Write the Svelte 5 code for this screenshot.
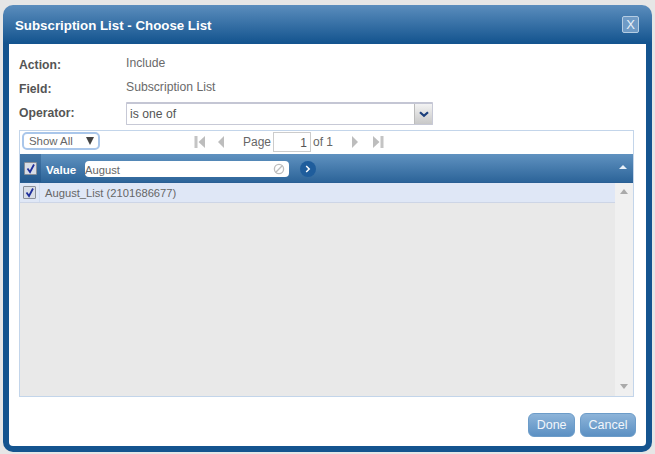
<script>
  let filter = $state('August');
</script>

<div class="page">
  <div class="dialog">
    <header class="title">
      <h1>Subscription List - Choose List</h1>
      <button class="close" aria-label="Close">X</button>
    </header>
    <div class="body">
      <div class="fields">
        <div class="lbl l1">Action:</div><div class="val v1">Include</div>
        <div class="lbl l2">Field:</div><div class="val v2">Subscription List</div>
        <div class="lbl l3">Operator:</div>
        <div class="select">
          <span class="seltext">is one of</span>
          <span class="selbtn">
            <svg width="10" height="7" viewBox="0 0 10 7"><path d="M1 1.2 L5 4.8 L9 1.2" fill="none" stroke="#1c3f7c" stroke-width="2.2"/></svg>
          </span>
        </div>
      </div>

      <div class="panel">
        <div class="toolbar">
          <div class="showall"><span>Show All</span><i class="tri"></i></div>
          <div class="pager">
            <svg class="first" width="12" height="14" viewBox="0 0 12 14"><rect x="0.5" y="1" width="3" height="12" fill="#c4c4c4"/><path d="M11 1 V13 L4.5 7 Z" fill="#bdbdbd"/></svg>
            <svg class="prev" width="8" height="14" viewBox="0 0 8 14"><path d="M7 1 V13 L1 7 Z" fill="#bdbdbd"/></svg>
            <span class="page-l">Page</span>
            <span class="pageinput">1</span>
            <span class="of">of 1</span>
            <svg class="next" width="8" height="14" viewBox="0 0 8 14"><path d="M1 1 V13 L7 7 Z" fill="#bdbdbd"/></svg>
            <svg class="last" width="12" height="14" viewBox="0 0 12 14"><path d="M1 1 V13 L7.5 7 Z" fill="#bdbdbd"/><rect x="8.5" y="1" width="3" height="12" fill="#c4c4c4"/></svg>
          </div>
        </div>
        <div class="thead">
          <div class="hcheck"><span class="check"><svg width="11" height="11" viewBox="0 0 11 11"><path d="M2.5 5.5 L5 9 L9 1.5" fill="none" stroke="#1f2f9c" stroke-width="1.8"/></svg></span></div>
          <span class="hvalue">Value</span>
          <div class="search">
            <input bind:value={filter} aria-label="Filter" />
            <svg width="12" height="12" viewBox="0 0 12 12"><circle cx="6" cy="6" r="4.6" fill="none" stroke="#bdbdbd" stroke-width="1.3"/><path d="M2.8 9.2 L9.2 2.8" stroke="#bdbdbd" stroke-width="1.3"/></svg>
          </div>
          <span class="go"><svg width="6" height="8" viewBox="0 0 6 8"><path d="M1.2 1 L4.2 4 L1.2 7" fill="none" stroke="#fff" stroke-width="1.5"/></svg></span>
          <i class="hsort"></i>
        </div>
        <div class="list">
          <div class="rows">
            <div class="row">
              <div class="rcheck"><span class="check"><svg width="11" height="11" viewBox="0 0 11 11"><path d="M2.5 5.5 L5 9 L9 1.5" fill="none" stroke="#1f2f9c" stroke-width="1.8"/></svg></span></div>
              <span class="rtext">August_List (2101686677)</span>
            </div>
          </div>
          <div class="scroll"><i class="up"></i><i class="down"></i></div>
        </div>
      </div>

      <div class="actions">
        <button class="btn">Done</button>
        <button class="btn">Cancel</button>
      </div>
    </div>
  </div>
</div>

<style>
  :global(body) { margin: 0; background: #e6e6e6; }
  .page {
    width: 655px; height: 454px; box-sizing: border-box; padding: 5px 3px 1px;
    font-family: "Liberation Sans", Arial, sans-serif; overflow: hidden;
  }
  .dialog {
    height: 447px; box-sizing: border-box; background: #14548f; border-radius: 10px;
    padding: 0 6px 6px; display: flex; flex-direction: column;
    background-image: linear-gradient(#5b8dbd 0, #14548f 38px, #14548f 100%);
  }
  .title { height: 39px; flex: none; display: flex; align-items: center; justify-content: space-between; padding: 0 7px 0 6px; box-sizing: border-box; }
  h1 { margin: 2px 0 0; font-size: 13.3px; font-weight: 700; color: #fff; }
  .close {
    width: 17px; height: 17px; padding: 0; box-sizing: border-box; border: 1px solid #b5cde3; border-radius: 2px;
    background: #6f9bc6; color: #e8f0f8; font: 13px "Liberation Sans", sans-serif; line-height: 14px;
  }
  .body { flex: 1; background: #fff; border-radius: 0 0 4px 4px; padding: 0 12px 0 10px; display: flex; flex-direction: column; min-height: 0; }
  .fields { display: grid; grid-template-columns: 107px 307px; grid-template-rows: 24px 24px 27px; height: 86px; padding-top: 9px; box-sizing: border-box; }
  .lbl { font-size: 12.2px; font-weight: 700; color: #555; padding-top: 5px; }
  .val { font-size: 12.2px; color: #6a6a6a; padding-top: 3px; }
  .select { height: 23px; width: 307px; box-sizing: border-box; border: 1px solid #c7c9d6; border-top: 2px solid #c4c6d4; display: flex; background: #fff; margin-top: 1px; border-radius: 1px; }
  .seltext { flex: 1; font-size: 12.2px; color: #555; padding: 3px 0 0 3px; }
  .selbtn { width: 17px; background: linear-gradient(#f3f3f3, #c8c8c8); border-left: 1px solid #bbb; display: flex; align-items: center; justify-content: center; }
  .panel { height: 267px; width: 615px; box-sizing: border-box; border: 1px solid #c3d5ea; display: flex; flex-direction: column; flex: none; }
  .toolbar { height: 23px; flex: none; position: relative; display: flex; align-items: center; padding-left: 2px; background: #fff; }
  .showall {
    width: 78px; height: 18px; box-sizing: border-box; border: 2px solid #a9c6ea; border-radius: 5px;
    display: flex; align-items: center; justify-content: space-between; padding: 0 4px 0 5px;
    font-size: 11.4px; color: #666; margin-top: -3px;
  }
  .tri { width: 0; height: 0; border: 4.5px solid transparent; border-top: 8px solid #444; border-bottom: 0; }
  .pager { display: flex; align-items: center; margin-left: 94px; font-size: 12px; color: #666; margin-top: -2px; }
  .first { margin-right: 11px; }
  .prev { margin-right: 18px; }
  .pageinput { width: 38px; height: 20px; box-sizing: border-box; border: 1px solid #ccc; text-align: right; padding: 3px 3px 0 0; margin: 0 2px 0 2px; color: #555; }
  .of { margin-right: 18px; }
  .next { margin-right: 13px; }
  .thead { height: 29px; flex: none; display: flex; align-items: center; position: relative; background: linear-gradient(#6092c0, #2c6499); border-bottom: 1px solid #2a5f94; box-sizing: border-box; }
  .hcheck { width: 21px; height: 100%; display: flex; align-items: center; justify-content: center; background: rgba(20, 70, 120, 0.35); flex: none; }
  .check { width: 13px; height: 13px; box-sizing: border-box; border: 1px solid #8a8f98; background: #d8dde6; display: flex; align-items: center; justify-content: center; border-radius: 1px; }
  .hvalue { font-size: 11.6px; font-weight: 700; color: #fff; margin: 2px 10px 0 5px; width: 29px; white-space: nowrap; }
  .search { width: 204px; height: 16px; background: #fff; border-radius: 4px; display: flex; align-items: center; margin-top: 2px; }
  .search input { flex: 1; min-width: 0; border: 0; outline: 0; padding: 1px 0 0; background: transparent; font: 11.2px "Liberation Sans", sans-serif; color: #666; }
  .search svg { margin-right: 4px; flex: none; }
  .go { width: 16px; height: 16px; margin-left: 11px; margin-top: 2px; border-radius: 50%; background: #1f5d9c; display: flex; align-items: center; justify-content: center; }
  .hsort { position: absolute; right: 6px; top: 11px; width: 0; height: 0; border: 4px solid transparent; border-bottom: 4px solid #e8f0f8; border-top: 0; }
  .list { flex: 1; display: flex; background: #e9e9e9; min-height: 0; }
  .rows { flex: 1; }
  .row { height: 20px; box-sizing: border-box; background: #dfe7f6; border-bottom: 1px solid #cdd5e6; display: flex; align-items: center; }
  .rcheck { width: 20px; height: 100%; flex: none; display: flex; align-items: center; justify-content: center; border-right: 1px solid #cfdcf0; box-sizing: border-box; }
  .rtext { font-size: 11.2px; color: #666; margin-left: 5px; }
  .scroll { width: 18px; flex: none; background: #f0f0f0; display: flex; flex-direction: column; justify-content: space-between; align-items: center; padding: 6px 0 7px; box-sizing: border-box; }
  .up { width: 0; height: 0; border: 4px solid transparent; border-bottom: 5px solid #aaa; border-top: 0; }
  .down { width: 0; height: 0; border: 4px solid transparent; border-top: 5px solid #aaa; border-bottom: 0; }
  .actions { flex: 1; display: flex; justify-content: flex-end; gap: 5px; padding: 16px 0 0; align-items: flex-start; margin-right: -2px; }
  .btn { height: 24px; padding: 0 7.5px; border: 1px solid #6c9cc9; border-radius: 6px; background: linear-gradient(#8db4d9, #5b90c3); color: #f2f6fb; font: 12.5px "Liberation Sans", sans-serif; }
</style>
